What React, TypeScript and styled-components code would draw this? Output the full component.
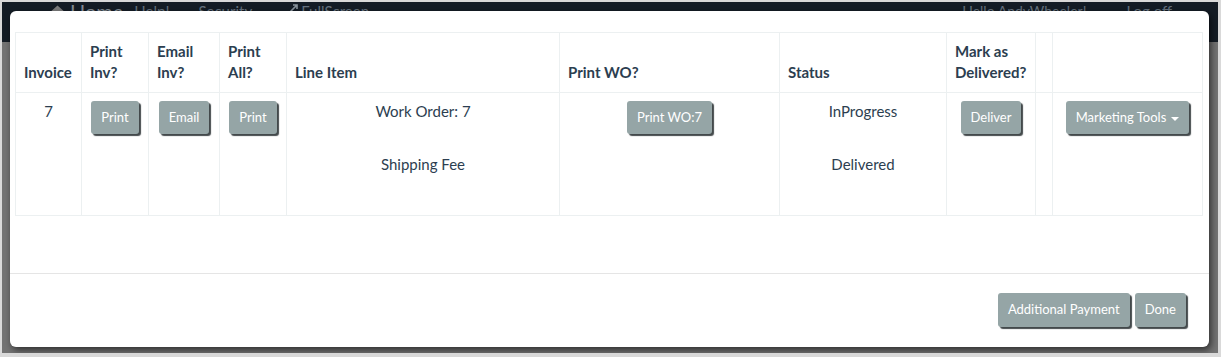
import { FC } from "react";
import styled, { createGlobalStyle } from "styled-components";

const GlobalStyle = createGlobalStyle`
  html, body {
    margin: 0;
    padding: 0;
    background: #d9d9d9;
  }
  * {
    box-sizing: border-box;
  }
`;

const Frame = styled.div`
  width: 1221px;
  height: 357px;
  padding: 2px 3px 4px 2px;
  background: #d9d9d9;
  font-family: Lato, "Open Sans", sans-serif;
`;

const Page = styled.div`
  position: relative;
  width: 100%;
  height: 100%;
  background: #737373;
  overflow: hidden;
`;

const NavBar = styled.div`
  height: 40px;
  background: #141c25;
  display: flex;
  align-items: flex-start;
  padding-left: 45px;
  color: #66727e;
  font-size: 15px;
`;

const Brand = styled.div`
  display: flex;
  align-items: flex-start;
  gap: 2px;
  font-size: 20px;
  margin-top: -3px;
  color: #858d96;
  margin-right: 11px;
`;

const NavLink = styled.div<{ $gap?: number; $size?: number }>`
  display: flex;
  align-items: center;
  gap: 2px;
  font-size: ${({ $size }) => $size ?? 15}px;
  margin-right: ${({ $gap }) => $gap ?? 30}px;
  white-space: nowrap;
`;

const NavSpacer = styled.div`
  flex: 1;
`;

const Modal = styled.div`
  position: absolute;
  left: 8px;
  top: 9px;
  width: 1199px;
  height: 336px;
  background: #fff;
  border-radius: 6px;
  box-shadow: 2px 3px 7px rgba(0, 0, 0, 0.6);
  display: flex;
  flex-direction: column;
  color: #2c3e50;
`;

const ModalBody = styled.div`
  padding: 21px 7px 0 5px;
  height: 262px;
`;

const ModalFooter = styled.div`
  border-top: 1px solid #e5e5e5;
  padding: 19px 23px 0 0;
  display: flex;
  justify-content: flex-end;
  gap: 5px;
`;

const Table = styled.table`
  width: 1187px;
  border-collapse: collapse;
  table-layout: fixed;
  font-size: 15px;
  line-height: 21.4px;
`;

const Th = styled.th`
  border: 1px solid #ecf0f1;
  padding: 8px;
  text-align: left;
  vertical-align: bottom;
  font-weight: 700;
`;

const Td = styled.td`
  border: 1px solid #ecf0f1;
  padding: 8px;
  text-align: center;
  vertical-align: top;
`;

const Entry = styled.div`
  height: 53px;
`;

const Button = styled.button`
  font-family: Lato, "Open Sans", sans-serif;
  font-size: 13px;
  line-height: 1.5;
  padding: 7px 10px;
  color: #fff;
  background: #95a5a6;
  border: none;
  border-radius: 3px;
  box-shadow: 2px 2px 1px rgba(20, 28, 30, 0.8);
  white-space: nowrap;
  display: inline-flex;
  align-items: center;
`;

const Caret = styled.span`
  display: inline-block;
  margin-left: 5px;
  margin-top: 2px;
  border-top: 4px solid #fff;
  border-left: 4px solid transparent;
  border-right: 4px solid transparent;
`;

const HomeIcon: FC = () => (
  <svg width="21" height="22" viewBox="0 0 22 22" style={{ marginTop: 5 }}>
    <path d="M11 1 L21 10 L17 10 L17 20 L5 20 L5 10 L1 10 Z" fill="#7d7d7d" />
  </svg>
);

const ExpandIcon: FC = () => (
  <svg width="10" height="10" viewBox="0 0 10 10" style={{ marginTop: -6 }}>
    <path d="M1 9 L8 2 M4 2 L8 2 L8 6" stroke="#8a949d" strokeWidth="1.6" fill="none" />
  </svg>
);

const widths = [66, 67, 71, 67, 273, 220, 167, 89, 17, 150];

export default function App() {
  return (
    <>
      <GlobalStyle />
      <Frame>
        <Page>
          <NavBar>
            <Brand>
              <HomeIcon />
              Home
            </Brand>
            <NavLink $gap={29}>Help!</NavLink>
            <NavLink $gap={37}>Security</NavLink>
            <NavLink>
              <ExpandIcon />
              FullScreen
            </NavLink>
            <NavSpacer />
            <NavLink $gap={40} $size={14}>
              Hello AndyWheeler!
            </NavLink>
            <NavLink $gap={46}>Log off</NavLink>
          </NavBar>
          <Modal>
            <ModalBody>
              <Table>
                <colgroup>
                  {widths.map((w, i) => (
                    <col key={i} style={{ width: w }} />
                  ))}
                </colgroup>
                <thead>
                  <tr>
                    <Th>Invoice</Th>
                    <Th>Print Inv?</Th>
                    <Th>Email Inv?</Th>
                    <Th>Print All?</Th>
                    <Th>Line Item</Th>
                    <Th>Print WO?</Th>
                    <Th>Status</Th>
                    <Th>Mark as Delivered?</Th>
                    <Th />
                    <Th />
                  </tr>
                </thead>
                <tbody>
                  <tr>
                    <Td>7</Td>
                    <Td>
                      <Button>Print</Button>
                    </Td>
                    <Td>
                      <Button>Email</Button>
                    </Td>
                    <Td>
                      <Button>Print</Button>
                    </Td>
                    <Td>
                      <Entry>Work Order: 7</Entry>
                      <Entry>Shipping Fee</Entry>
                    </Td>
                    <Td>
                      <Button>Print WO:7</Button>
                    </Td>
                    <Td>
                      <Entry>InProgress</Entry>
                      <Entry>Delivered</Entry>
                    </Td>
                    <Td>
                      <Button>Deliver</Button>
                    </Td>
                    <Td />
                    <Td>
                      <Button>
                        Marketing Tools
                        <Caret />
                      </Button>
                    </Td>
                  </tr>
                </tbody>
              </Table>
            </ModalBody>
            <ModalFooter>
              <Button>Additional Payment</Button>
              <Button>Done</Button>
            </ModalFooter>
          </Modal>
        </Page>
      </Frame>
    </>
  );
}
